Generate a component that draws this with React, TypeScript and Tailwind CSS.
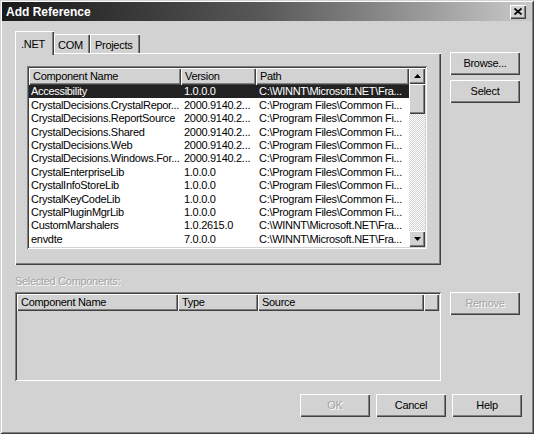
const font = { fontFamily: '"Liberation Sans", Arial, sans-serif' };

const raised =
  'bg-[#d2d2d2] shadow-[inset_1px_1px_#ffffff,inset_-1px_-1px_#404040,inset_-2px_-2px_#808080]';
const sunken =
  'shadow-[inset_1px_1px_#808080,inset_-1px_-1px_#ffffff,inset_2px_2px_#404040,inset_-2px_-2px_#d2d2d2]';
const disabledText = 'text-[#a4a4a4] [text-shadow:1px_1px_0_#ffffff]';

const components = [
  ['Accessibility', '1.0.0.0', 'C:\\WINNT\\Microsoft.NET\\Fra...'],
  ['CrystalDecisions.CrystalRepor...', '2000.9140.2...', 'C:\\Program Files\\Common Fi...'],
  ['CrystalDecisions.ReportSource', '2000.9140.2...', 'C:\\Program Files\\Common Fi...'],
  ['CrystalDecisions.Shared', '2000.9140.2...', 'C:\\Program Files\\Common Fi...'],
  ['CrystalDecisions.Web', '2000.9140.2...', 'C:\\Program Files\\Common Fi...'],
  ['CrystalDecisions.Windows.For...', '2000.9140.2...', 'C:\\Program Files\\Common Fi...'],
  ['CrystalEnterpriseLib', '1.0.0.0', 'C:\\Program Files\\Common Fi...'],
  ['CrystalInfoStoreLib', '1.0.0.0', 'C:\\Program Files\\Common Fi...'],
  ['CrystalKeyCodeLib', '1.0.0.0', 'C:\\Program Files\\Common Fi...'],
  ['CrystalPluginMgrLib', '1.0.0.0', 'C:\\Program Files\\Common Fi...'],
  ['CustomMarshalers', '1.0.2615.0', 'C:\\WINNT\\Microsoft.NET\\Fra...'],
  ['envdte', '7.0.0.0', 'C:\\WINNT\\Microsoft.NET\\Fra...'],
];

function HeaderCell({ label, w }: { label: string; w: string }) {
  return (
    <div className={`${raised} ${w} h-full shrink-0 flex items-center pl-[4px] overflow-hidden whitespace-nowrap`}>
      {label}
    </div>
  );
}

function Button({ label, disabled }: { label: string; disabled?: boolean }) {
  return (
    <div className={`${raised} w-[70px] h-[23px] flex items-center justify-center ${disabled ? disabledText : 'text-black'}`}>
      {label}
    </div>
  );
}

function Arrow({ down }: { down?: boolean }) {
  return (
    <div className={`${raised} w-[16px] h-[16px] shrink-0 flex items-center justify-center`}>
      <svg width="7" height="4" viewBox="0 0 7 4">
        {down ? <polygon points="0,0 7,0 3.5,4" fill="#000" /> : <polygon points="0,4 7,4 3.5,0" fill="#000" />}
      </svg>
    </div>
  );
}

export default function App() {
  return (
    <div
      style={font}
      className="w-[534px] h-[434px] bg-[#d2d2d2] text-[11px] tracking-[-0.3px] text-black flex flex-col p-[2px] shadow-[inset_1px_1px_#d2d2d2,inset_-1px_-1px_#404040,inset_2px_2px_#ffffff,inset_-2px_-2px_#808080]"
    >
      {/* Title bar */}
      <div className="h-[19px] shrink-0 flex items-center justify-between pl-[4px] pr-[6px] bg-gradient-to-r from-[#1a1a1a] via-[#5a5a5a] to-[#cacaca]">
        <span className="text-white font-bold text-[12px] tracking-normal">Add Reference</span>
        <div className={`${raised} w-[16px] h-[14px] flex items-center justify-center`}>
          <svg width="8" height="7" viewBox="0 0 8 7">
            <path d="M0.5 0.5 L7.5 6.5 M7.5 0.5 L0.5 6.5" stroke="#000" strokeWidth="1.8" />
          </svg>
        </div>
      </div>

      <div className="flex-1 flex flex-col pl-[13px] pr-[10px] pt-[10px]">
        {/* Top row: tabs + panel | buttons */}
        <div className="flex gap-[9px]">
          <div className="w-[426px] flex flex-col">
            <div className="h-[22px] flex items-end">
              <div className="relative z-10 -mb-[2px] w-[39px] h-[24px] bg-[#d2d2d2] shadow-[inset_1px_1px_#ffffff,inset_-1px_0_#404040,inset_-2px_0_#808080] pl-[6px] pt-[5px]">
                .NET
              </div>
              <div className="w-[36px] h-[19px] bg-[#d2d2d2] shadow-[inset_1px_1px_#ffffff,inset_-1px_0_#404040,inset_-2px_0_#808080] pl-[4px] pt-[3px]">
                COM
              </div>
              <div className="w-[50px] h-[19px] bg-[#d2d2d2] shadow-[inset_1px_1px_#ffffff,inset_-1px_0_#404040,inset_-2px_0_#808080] pl-[5px] pt-[3px]">
                Projects
              </div>
            </div>
            <div className="h-[212px] pl-[12px] pr-[14px] pt-[13px] pb-[16px] shadow-[inset_1px_1px_#ffffff,inset_-1px_-1px_#404040,inset_-2px_-2px_#808080]">
              <div className={`${sunken} bg-white h-full p-[2px] flex`}>
                <div className="flex-1 flex flex-col">
                  <div className="h-[17px] flex">
                    <HeaderCell label="Component Name" w="w-[152px]" />
                    <HeaderCell label="Version" w="w-[75px]" />
                    <HeaderCell label="Path" w="w-[153px]" />
                  </div>
                  {components.map(([name, ver, path], i) => (
                    <div
                      key={name}
                      className={`h-[13.4px] flex items-center whitespace-nowrap ${i === 0 ? 'bg-[#222222] text-white' : ''}`}
                    >
                      <span className="w-[152px] pl-[2px] overflow-hidden">{name}</span>
                      <span className="w-[75px] pl-[3px] overflow-hidden">{ver}</span>
                      <span className="w-[153px] pl-[3px] overflow-hidden">{path}</span>
                    </div>
                  ))}
                </div>
                <div className="w-[16px] flex flex-col">
                  <Arrow />
                  <div className={`${raised} h-[30px] shrink-0`} />
                  <div className="flex-1 bg-[repeating-conic-gradient(#ffffff_0_25%,#d2d2d2_0_50%)] bg-[length:2px_2px]" />
                  <Arrow down />
                </div>
              </div>
            </div>
          </div>
          <div className="pt-[21px] flex flex-col gap-[5px]">
            <Button label="Browse..." />
            <Button label="Select" />
          </div>
        </div>

        {/* Selected components */}
        <div className="flex gap-[9px]">
          <div className="w-[426px] flex flex-col">
            <div className={`h-[27px] flex items-end pb-[3px] ${disabledText}`}>Selected Components:</div>
            <div className={`${sunken} h-[89px] p-[2px]`}>
              <div className="h-[17px] flex">
                <HeaderCell label="Component Name" w="w-[161px]" />
                <HeaderCell label="Type" w="w-[80px]" />
                <HeaderCell label="Source" w="w-[166px]" />
                <HeaderCell label="" w="w-[15px]" />
              </div>
            </div>
          </div>
          <div className="pt-[27px]">
            <Button label="Remove" disabled />
          </div>
        </div>

        {/* Bottom buttons */}
        <div className="mt-[13px] flex justify-end gap-[6px]">
          <Button label="OK" disabled />
          <Button label="Cancel" />
          <Button label="Help" />
        </div>
      </div>
    </div>
  );
}
